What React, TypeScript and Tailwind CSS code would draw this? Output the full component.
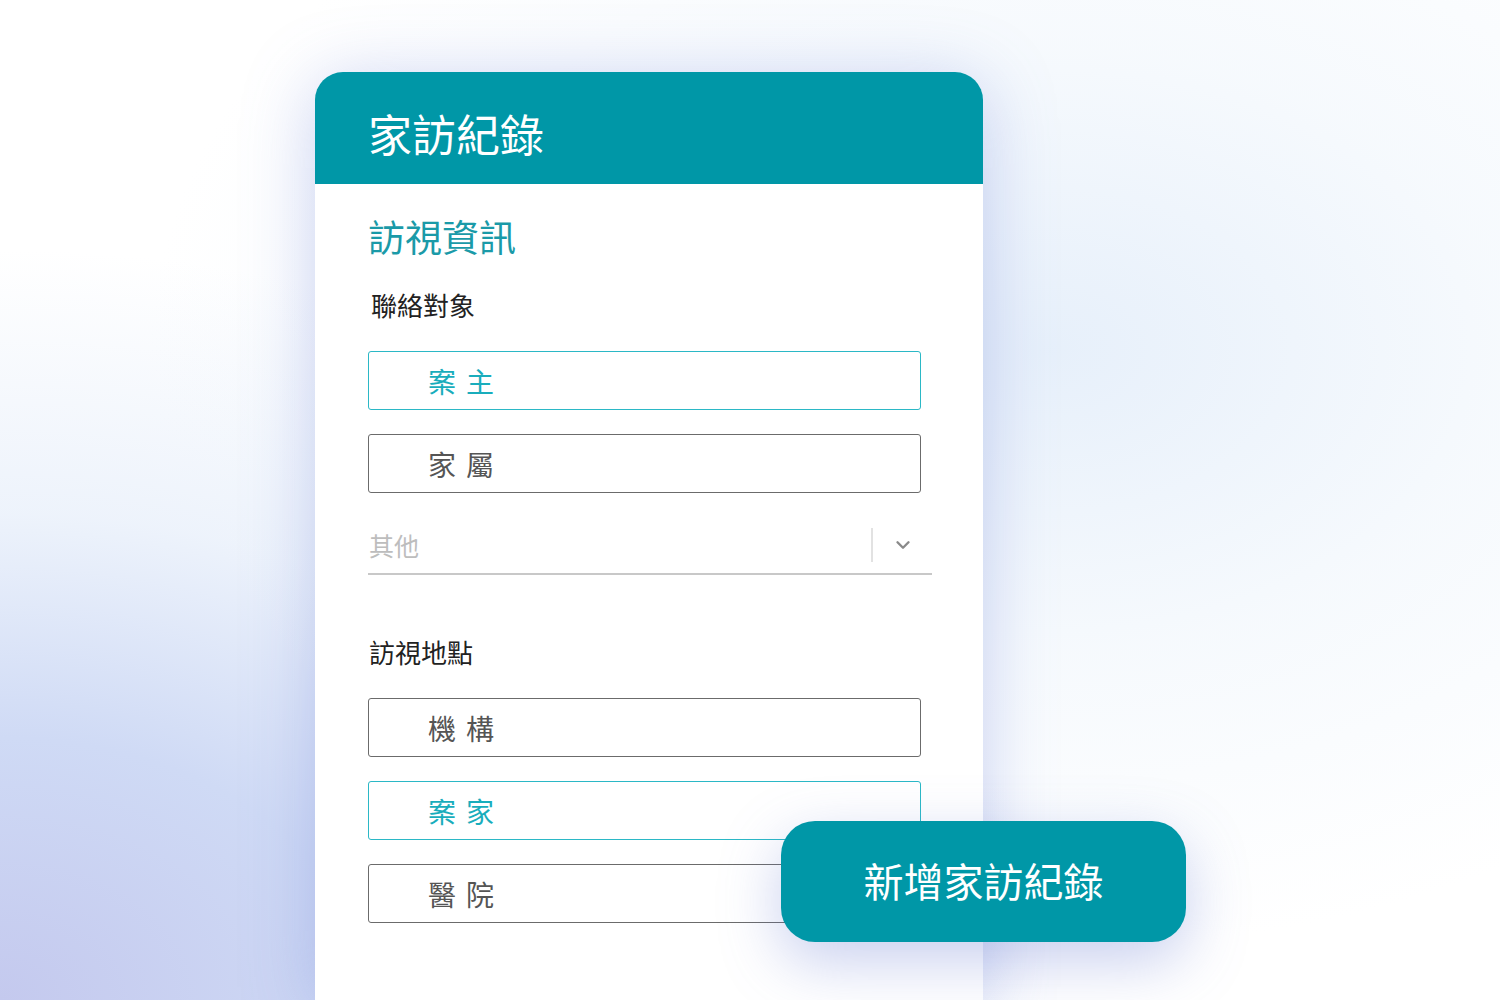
import React from "react";
import { ChevronDown } from "lucide-react";

type Option = { label: string; active?: boolean };

const contactOptions: Option[] = [
    { label: "案主", active: true },
    { label: "家屬" },
];

const placeOptions: Option[] = [
    { label: "機構" },
    { label: "案家", active: true },
    { label: "醫院" },
];

function OptionBox({ label, active }: Option) {
    return (
        <div
            className={`flex h-[59px] w-[553px] items-center rounded-[3px] border-[1.5px] bg-white pl-[59px] ${
                active ? "border-[#2bb8c6] text-[#19adbc]" : "border-[#6b6b6b] text-[#555]"
            }`}
        >
            <span className="text-[28px] leading-none tracking-[10px]">{label}</span>
        </div>
    );
}

export default function App() {
    return (
        <div className="relative h-[1000px] w-[1500px] overflow-hidden bg-white font-['Noto_Sans_CJK_TC','Noto_Sans',sans-serif]">
            {/* Background glow */}
            <div className="absolute inset-0 bg-[radial-gradient(ellipse_70%_75%_at_0%_100%,#c4c9ee_0%,#cfdaf5_35%,rgba(230,238,250,0.7)_65%,rgba(255,255,255,0)_100%)]" />
            <div className="absolute inset-0 bg-[radial-gradient(ellipse_60%_60%_at_70%_35%,rgba(228,238,250,0.9)_0%,rgba(240,246,252,0.6)_50%,rgba(255,255,255,0)_100%)]" />

            {/* Card */}
            <div className="relative flex h-full flex-col pl-[315px] pt-[72px]">
                <div className="flex w-[668px] flex-1 flex-col overflow-hidden rounded-t-[28px] bg-white shadow-[0_10px_70px_rgba(110,130,215,0.35)]">
                    <div className="h-[112px] bg-[#0097a7] pl-[53px] pt-[39px]">
                        <h1 className="text-[44px] leading-none font-normal text-white">家訪紀錄</h1>
                    </div>

                    <div className="flex flex-col pl-[53px]">
                        <h2 className="mt-[34px] text-[37px] leading-none text-[#1a9aa8]">訪視資訊</h2>
                        <p className="mt-[37px] pl-[3px] text-[26px] leading-none text-[#222]">聯絡對象</p>

                        <div className="mt-[33px] flex flex-col gap-[24px]">
                            {contactOptions.map((o) => (
                                <OptionBox key={o.label} {...o} />
                            ))}
                        </div>

                        {/* Select */}
                        <div className="mt-[24px] flex h-[58px] w-[564px] items-center border-b-2 border-[#c8c8c8]">
                            <span className="flex-1 pl-[1px] text-[25px] leading-none text-[#bdbdbd]">其他</span>
                            <div className="h-[34px] w-[2px] bg-[#e2e2e2]" />
                            <div className="flex w-[59px] items-center justify-center">
                                <ChevronDown size={22} strokeWidth={2.6} className="text-[#8a8a8a]" />
                            </div>
                        </div>

                        <p className="mt-[64px] pl-[1px] text-[26px] leading-none text-[#222]">訪視地點</p>

                        <div className="mt-[33px] flex flex-col gap-[24px]">
                            {placeOptions.map((o) => (
                                <OptionBox key={o.label} {...o} />
                            ))}
                        </div>
                    </div>
                </div>
            </div>

            {/* Floating add button */}
            <button className="absolute left-[781px] top-[821px] flex h-[121px] w-[405px] items-center justify-center rounded-[34px] bg-[#0097a7] pb-[3px] text-[40px] leading-none text-white shadow-[0_20px_60px_rgba(100,120,210,0.35)]">
                新增家訪紀錄
            </button>
        </div>
    );
}
